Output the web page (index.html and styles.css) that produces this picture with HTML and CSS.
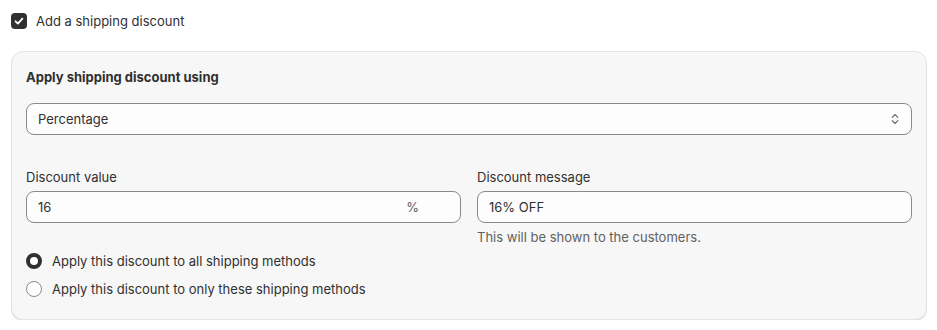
FILE: index.html
```html
<!DOCTYPE html>
<html>
<head>
<meta charset="utf-8">
<link rel="stylesheet" href="styles.css">
</head>
<body>
<div class="page">
  <label class="check-row">
    <span class="checkbox">
      <svg viewBox="0 0 16 16" width="16" height="16"><path d="M4.6 8.3l2.3 2.3 4.5-5" fill="none" stroke="#fff" stroke-width="1.8" stroke-linecap="round" stroke-linejoin="round"/></svg>
    </span>
    <span>Add a shipping discount</span>
  </label>

  <div class="card">
    <div class="heading">Apply shipping discount using</div>
    <div class="select">
      <span>Percentage</span>
      <svg class="chev" viewBox="0 0 12 16" width="12" height="16"><path d="M3.2 6.3l2.8-2.8 2.8 2.8M3.2 9.7l2.8 2.8 2.8-2.8" fill="none" stroke="#666" stroke-width="1.1" stroke-linecap="round" stroke-linejoin="round"/></svg>
    </div>

    <div class="fields">
      <div class="field">
        <div class="label">Discount value</div>
        <div class="input"><span class="val">16</span><span class="suffix">%</span></div>
      </div>
      <div class="field">
        <div class="label">Discount message</div>
        <div class="input"><span class="val">16% OFF</span></div>
        <div class="help">This will be shown to the customers.</div>
      </div>
    </div>

    <div class="radios">
      <div class="radio-row"><span class="radio on"></span><span>Apply this discount to all shipping methods</span></div>
      <div class="radio-row"><span class="radio"></span><span>Apply this discount to only these shipping methods</span></div>
    </div>
  </div>
</div>
</body>
</html>
```

FILE: styles.css
```css
* { box-sizing: border-box; }
body {
  margin: 0;
  background: #ffffff;
  font-family: Inter, "Noto Sans", sans-serif;
  font-size: 13px;
  line-height: 20px;
  color: #303030;
}
.page {
  padding: 11px 0 0 11px;
  width: 927px;
}
.check-row {
  display: flex;
  align-items: center;
  gap: 9px;
  height: 20px;
}
.checkbox {
  width: 16px;
  height: 16px;
  border-radius: 4px;
  background: #303030;
  display: flex;
}
.card {
  margin-top: 20px;
  background: #f7f7f7;
  border: 1px solid #e3e3e3;
  border-radius: 12px;
  box-shadow: 0 1px 0 rgba(0,0,0,0.12);
  padding: 15px 14px 20px 14px;
}
.heading {
  font-weight: 650;
  line-height: 20px;
}
.select {
  margin-top: 16px;
  height: 32px;
  border: 1px solid #8a8a8a;
  border-radius: 8px;
  background: #fdfdfd;
  display: flex;
  align-items: center;
  justify-content: space-between;
  padding: 0 10px 0 11px;
}
.fields {
  margin-top: 32px;
  display: grid;
  grid-template-columns: 1fr 1fr;
  gap: 16px;
}
.label { line-height: 20px; }
.input {
  margin-top: 4px;
  height: 32px;
  border: 1px solid #8a8a8a;
  border-radius: 8px;
  background: #fdfdfd;
  display: flex;
  align-items: center;
  justify-content: space-between;
  padding: 0 41px 0 11px;
}
.suffix { color: #616161; }
.help {
  margin-top: 4px;
  color: #616161;
}
.radios {
  margin-top: 4px;
  display: flex;
  flex-direction: column;
  gap: 8px;
}
.radio-row {
  display: flex;
  align-items: center;
  gap: 10px;
  height: 20px;
}
.radio {
  width: 16px;
  height: 16px;
  border-radius: 50%;
  border: 1px solid #8a8a8a;
  background: #fff;
}
.radio.on {
  border: 4.5px solid #303030;
}
```
